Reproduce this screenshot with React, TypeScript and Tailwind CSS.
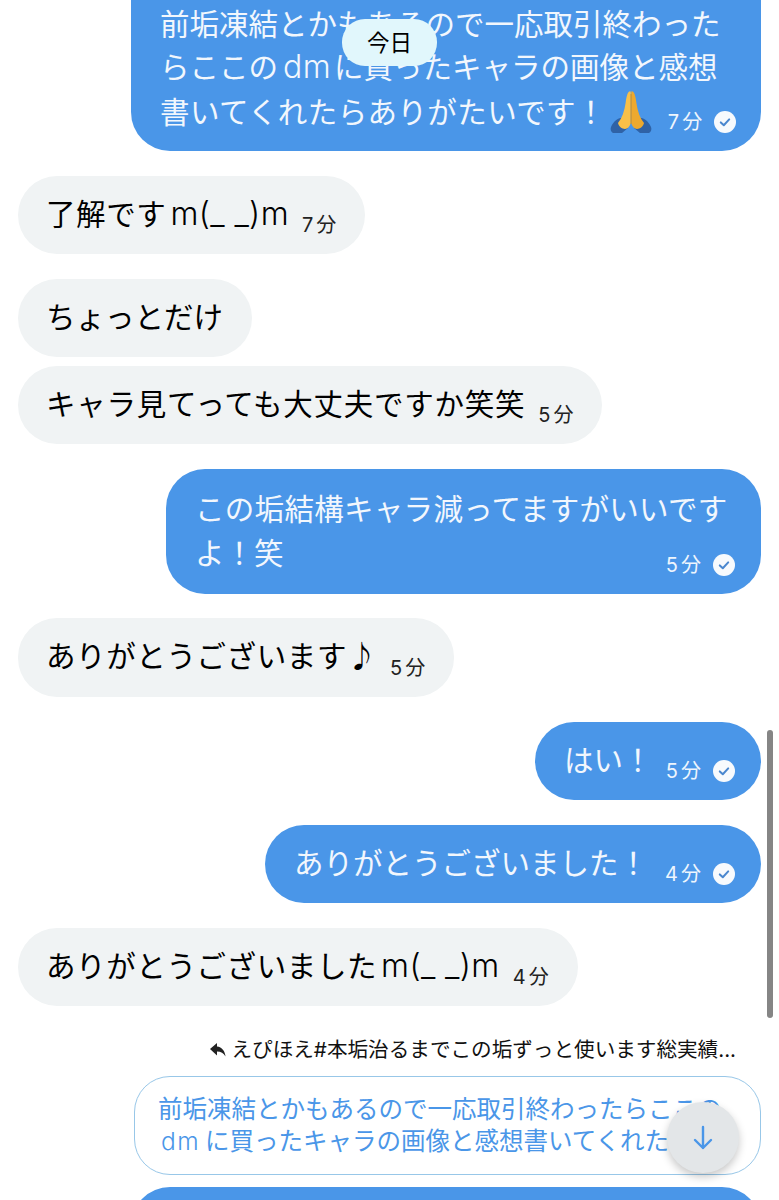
import React from "react";

const BLUE = "bg-[#4a96e8]";

function Check() {
  return (
    <svg width="22" height="22" viewBox="0 0 22 22" className="shrink-0">
      <circle cx="11" cy="11" r="11" fill="#f7fafd" />
      <path d="M6.8 11.4 L9.8 14.2 L15.2 8.4" fill="none" stroke="#4a87cf" strokeWidth="2" strokeLinecap="round" strokeLinejoin="round" />
    </svg>
  );
}

function Pray() {
  return (
    <svg width="42" height="42" viewBox="0 0 42 42" className="shrink-0">
      <path d="M1 36 C4 29 10 26 14 27 L18 37 L12 42 L3 42 C1 41 0 38 1 36 Z" fill="#2f62a6" />
      <path d="M41 36 C38 29 32 26 28 27 L24 37 L30 42 L39 42 C41 41 42 38 41 36 Z" fill="#2f62a6" />
      <path d="M18.6 1 C20 -0.5 20.8 0 20.8 2 L20.8 32 C20 35 17.5 38 15 38 C12 38 8.5 35 8 32 C12 27 14.5 20 15.6 12 C16.2 7 17 3 18.6 1 Z" fill="#f8c048" />
      <path d="M23.4 1 C22 -0.5 21.2 0 21.2 2 L21.2 32 C22 35 24.5 38 27 38 C30 38 33.5 35 34 32 C30 27 27.5 20 26.4 12 C25.8 7 25 3 23.4 1 Z" fill="#eda92f" />
      <path d="M21 3 V33" stroke="#c98a22" strokeWidth="0.8" fill="none" />
    </svg>
  );
}

function Lat({ children, cls = "ml-[4px]" }: { children: React.ReactNode; cls?: string }) {
  return <span className={`text-[32px] leading-none tracking-[0.4px] font-light ${cls}`}>{children}</span>;
}

function Meta({ t, out }: { t: string; out?: boolean }) {
  return (
    <span className={`flex items-center shrink-0 text-[20px] leading-[26px] ${out ? "text-[#eef5fd]" : "text-[#222222]"}`}>
      <span>
        <span className="mr-[3px]">{t[0]}</span>
        {t.slice(1)}
      </span>
      {out && <span className="ml-[12px]"><Check /></span>}
    </span>
  );
}

function In({
  text,
  lat,
  t,
  mb = "mb-[25px]",
  h = "h-[78px]",
  track = "tracking-[0.6px]",
}: {
  text: string;
  lat?: string;
  t?: string;
  mb?: string;
  h?: string;
  track?: string;
}) {
  return (
    <div className={`self-start flex items-center ${h} rounded-[39px] bg-[#f0f3f4] pl-[28px] pr-[29px] text-black ${mb}`}>
      <span className={`text-[29.5px] leading-[43px] whitespace-nowrap -mt-[2px] ${track}`}>
        {text}
        {lat && <Lat>{lat}</Lat>}
      </span>
      {t && <span className="ml-[13px] mt-[20px]"><Meta t={t} /></span>}
    </div>
  );
}

function Out({ text, t, w }: { text: string; t: string; w: string }) {
  return (
    <div className={`self-end flex items-center justify-between h-[78px] ${w} rounded-[39px] ${BLUE} pl-[29px] pr-[26px] mb-[25px]`}>
      <span className="text-[29.5px] leading-[43px] whitespace-nowrap -mt-[2px] text-[#f2f7fd]">{text}</span>
      <span className="mt-[20px]"><Meta t={t} out /></span>
    </div>
  );
}

export default function App() {
  return (
    <div
      className="relative h-[1200px] w-[779px] overflow-hidden bg-white"
      style={{ fontFamily: 'Inter, "Noto Sans CJK JP", sans-serif' }}
    >
      <div className="flex flex-col pl-[18px] pr-[18px] -mt-[20px]">
        <div className={`self-end w-[630px] h-[171px] rounded-b-[39px] ${BLUE} pl-[29px] pr-[26px] pt-[23px] mb-[25px] text-[#f2f7fd]`}>
          <div className="text-[29.5px] leading-[43px] whitespace-nowrap">前垢凍結とかもあるので一応取引終わった</div>
          <div className="text-[29.5px] leading-[43px] whitespace-nowrap">
            らここの<Lat cls="ml-[5px] mr-[3px]">dm</Lat>に買ったキャラの画像と感想
          </div>
          <div className="flex items-center text-[29.5px] leading-[43px] whitespace-nowrap">
            <span className="tracking-[0.4px]">書いてくれたらありがたいです！</span>
            <span className="ml-[4px] -mt-[1px]"><Pray /></span>
            <span className="ml-[16px] mt-[20px]"><Meta t="7分" out /></span>
          </div>
        </div>

        <In text="了解です" lat="m(_ _)m" t="7分" />
        <In text="ちょっとだけ" mb="mb-[9px]" track="tracking-normal" />
        <In text="キャラ見てっても大丈夫ですか笑笑" t="5分" track="tracking-[0.75px]" />

        <div className={`self-end w-[595px] h-[125px] rounded-[39px] ${BLUE} pl-[29px] pr-[26px] pt-[18px] mb-[24px] text-[#f2f7fd]`}>
          <div className="text-[29.5px] leading-[44px] whitespace-nowrap tracking-[0.3px]">この垢結構キャラ減ってますがいいです</div>
          <div className="flex justify-between">
            <span className="text-[29.5px] leading-[44px]">よ！笑</span>
            <span className="mt-[21px]"><Meta t="5分" out /></span>
          </div>
        </div>

        <In text="ありがとうございます♪" t="5分" h="h-[79px]" />
        <Out text="はい！" t="5分" w="w-[226px]" />
        <Out text="ありがとうございました！" t="4分" w="w-[496px]" />
        <In text="ありがとうございました" lat="m(_ _)m" t="4分" />

        <div className="self-end flex items-center h-[28px] mt-[5px] mb-[12px] pr-[25px] text-[20.6px] text-[#111111] whitespace-nowrap">
          <svg width="16" height="14" viewBox="0 0 16 14" className="mr-[6px]">
            <path d="M7 0 L0 6 L7 12.5 L7 8.5 C11 8.5 13.5 10 15.5 13.5 C15 8 12 4 7 3.5 Z" fill="#222222" />
          </svg>
          <span>えぴほえ#本垢治るまでこの垢ずっと使います総実績...</span>
        </div>

        <div className="self-end w-[627px] h-[99px] rounded-[36px] border border-[#98c7e8] pl-[23px] pt-[16px] mb-[12px] overflow-hidden text-[#4a96e8]">
          <div className="text-[24.5px] leading-[32px] whitespace-nowrap">前垢凍結とかもあるので一応取引終わったらここの</div>
          <div className="text-[24.5px] leading-[32px] whitespace-nowrap pl-[3px]">
            <span className="font-light tracking-[1.4px] mr-[5px]">dm</span>に買ったキャラの画像と感想書いてくれたら
          </div>
        </div>

        <div className={`self-end w-[630px] h-[80px] rounded-t-[39px] ${BLUE}`} />
      </div>

      <div className="absolute left-[342px] top-[19px] w-[95px] h-[47px] rounded-[23px] bg-[#e1f7fc] flex items-center justify-center text-[22.5px] text-black">
        今日
      </div>

      <div className="absolute left-[767px] top-[730px] w-[6px] h-[288px] rounded-[3px] bg-[#858585]" />

      <div className="absolute left-[667px] top-[1102px] w-[72px] h-[71px] rounded-full bg-[#e3e6e8] shadow-[0_4px_8px_rgba(0,0,0,0.22)] flex items-center justify-center">
        <svg width="22" height="26" viewBox="0 0 22 26" fill="none" stroke="#4a96e8" strokeWidth="2.4" strokeLinecap="round" strokeLinejoin="round">
          <path d="M11 2 V23 M3 15 L11 23 L19 15" />
        </svg>
      </div>
    </div>
  );
}
